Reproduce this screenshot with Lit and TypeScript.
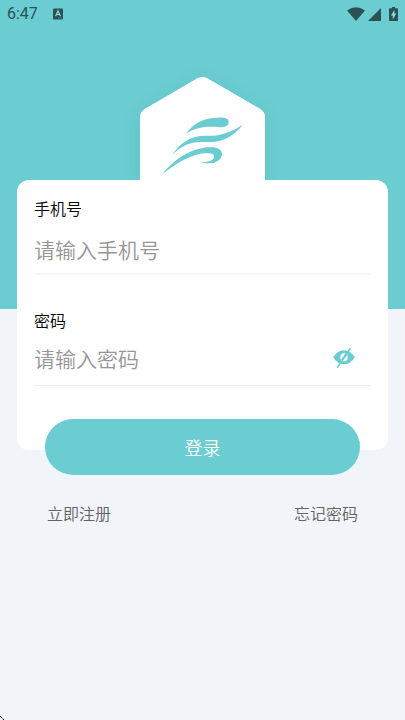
import { LitElement, html, css, svg } from "lit";
import { customElement, state } from "lit/decorators.js";

const wind = svg`
  <path d="M167 204C190 171 223 155 264 155C283 154 297 158 296 168C296 179 287 184 270 184C245 182 231 182 211 185C195 188 181 194 167 204Z"/>
  <path d="M125 268C151 230 181 210 222 209C247 210 260 209 281 203C302 197 320 188 338 176C319 201 294 219 264 226C243 231 226 226 199 229C171 232 147 246 125 268Z"/>
  <path d="M98 324C127 285 180 247 235 244C260 242 276 249 276 264C275 281 259 292 238 292C228 292 219 291 211 288C232 290 250 284 252 273C254 264 243 260 224 262C180 266 136 294 98 324Z"/>`;

@customElement("status-bar")
export class StatusBar extends LitElement {
  static styles = css`
    :host {
      display: flex;
      align-items: center;
      height: 28px;
      padding: 0 7px;
      color: #2a5254;
      font: 400 16px/28px Roboto, sans-serif;
    }
    svg { display: block; fill: currentColor; }
    .badge { margin-left: 15px; }
    .badge .letter { fill: none; stroke: #8fdadc; stroke-width: 1.2; }
    .right { display: flex; align-items: center; gap: 3px; margin-left: auto; }
    .battery { margin-left: 5px; }
    .bolt { fill: #8fdadc; }
  `;
  render() {
    return html`
      <span>6:47</span>
      <svg class="badge" width="11" height="12" viewBox="0 0 11 12">
        <rect x="0" y="0.5" width="10" height="11" rx="1" />
        <path class="letter" d="M2.7 8.2L5 2.8L7.4 8.2M3.5 6.5H6.5" />
        <path class="letter" d="M5 10H9" stroke-dasharray="1 .6" opacity=".5" />
      </svg>
      <div class="right">
        <svg width="18" height="14" viewBox="0 0 18 14">
          <path d="M0 3.4Q9 -3 18 3.4L9 14Z" />
        </svg>
        <svg width="13" height="13" viewBox="0 0 13 13"><path d="M0 13H13V0Z" /></svg>
        <svg class="battery" width="9" height="14" viewBox="0 0 9 14">
          <path d="M3 0H6V1.3H8.2Q9 1.3 9 2.1V13.2Q9 14 8.2 14H.8Q0 14 0 13.2V2.1Q0 1.3.8 1.3H3Z" />
          <path class="bolt" d="M5.4 3V6.6H7.2L3.8 12.4V8.6H2Z" />
        </svg>
      </div>
    `;
  }
}

@customElement("app-root")
export class AppRoot extends LitElement {
  @state() private visible = false;

  static styles = css`
    :host {
      --teal: #6bcdd2;
      display: flex;
      flex-direction: column;
      box-sizing: border-box;
      min-height: 100vh;
      position: relative;
      background: linear-gradient(var(--teal) 309px, #f1f5fa 309px);
      font-family: "Noto Sans CJK SC", sans-serif;
      font-size: 16px;
      font-weight: 350;
      line-height: 24px;
    }
    svg { display: block; }
    .logo {
      align-self: center;
      margin-top: 49px;
      overflow: visible;
      filter: drop-shadow(0 4px 8px rgba(30, 110, 120, 0.14));
    }
    .logo .plate { fill: #fff; }
    .logo .wind { fill: var(--teal); }
    .card {
      position: relative;
      display: flex;
      flex-direction: column;
      gap: 33px;
      margin: 0 17px;
      padding: 16px 17px 64px;
      border-radius: 12px;
      background: #fff;
    }
    label { display: block; color: #000; }
    .row {
      display: flex;
      align-items: center;
      box-sizing: border-box;
      height: 54px;
      padding-bottom: 2px;
      border-bottom: 1px solid #eee;
    }
    .phone {
      height: 55px;
      padding: 4px 0 0;
      border-bottom: 2px solid #f5f5f5;
    }
    input {
      flex: 1;
      min-width: 0;
      height: 40px;
      padding: 0;
      border: 0;
      outline: 0;
      background: none;
      color: #222;
      font: 350 21px/32px "Noto Sans CJK SC", sans-serif;
    }
    input::placeholder { color: #969696; opacity: 1; }
    button { border: 0; cursor: pointer; font-family: inherit; }
    .eye {
      margin-right: 16px;
      padding: 0;
      background: none;
      color: var(--teal);
    }
    .login {
      position: relative;
      height: 56px;
      margin: -31px 45px 0;
      border-radius: 28px;
      background: var(--teal);
      color: #fff;
      font-size: 18px;
      font-weight: 350;
    }
    .links {
      display: flex;
      justify-content: space-between;
      margin: 26px 47px 0;
    }
    a { color: #626262; text-decoration: none; }
    .corner { position: absolute; left: 0; bottom: 0; }
  `;

  render() {
    return html`
      <status-bar></status-bar>
      <svg class="logo" width="125" height="103" viewBox="30 33 375 309" role="img" aria-label="Logo">
        <path class="plate" d="M30 342V153Q30 137 45 128L202 37Q217 29 232 37L390 128Q405 137 405 153V342Z" />
        <g class="wind">${wind}</g>
      </svg>
      <form class="card" id="login" @submit=${(e: Event) => e.preventDefault()}>
        <div>
          <label for="phone">手机号</label>
          <div class="row phone">
            <input id="phone" type="tel" placeholder="请输入手机号" />
          </div>
        </div>
        <div>
          <label for="password">密码</label>
          <div class="row">
            <input id="password" type=${this.visible ? "text" : "password"} placeholder="请输入密码" />
            <button class="eye" type="button" aria-label="显示密码" @click=${() => (this.visible = !this.visible)}>
              <svg width="22" height="20" viewBox="0 0 66 60">
                <path fill="currentColor" d="M0 28Q14 7 33 7T66 28Q52 49 33 49T0 28Z" />
                <ellipse cx="33" cy="28" rx="11" ry="12" fill="#fff" />
                <path d="M27 37L40 18" stroke="currentColor" stroke-width="7" />
                <path d="M13 59L22 45M44 13L52 1" stroke="currentColor" stroke-width="5" />
              </svg>
            </button>
          </div>
        </div>
      </form>
      <button class="login" type="submit" form="login">登录</button>
      <nav class="links">
        <a href="#register">立即注册</a>
        <a href="#forgot">忘记密码</a>
      </nav>
      <svg class="corner" width="4" height="4" viewBox="0 0 4 4" shape-rendering="crispEdges">
        <path d="M0 0h1v1h-1zM1 1h1v1h-1zM3 3h1v1h-1z" />
        <path fill="#777" d="M2 2h1v1h-1z" />
      </svg>
    `;
  }
}
